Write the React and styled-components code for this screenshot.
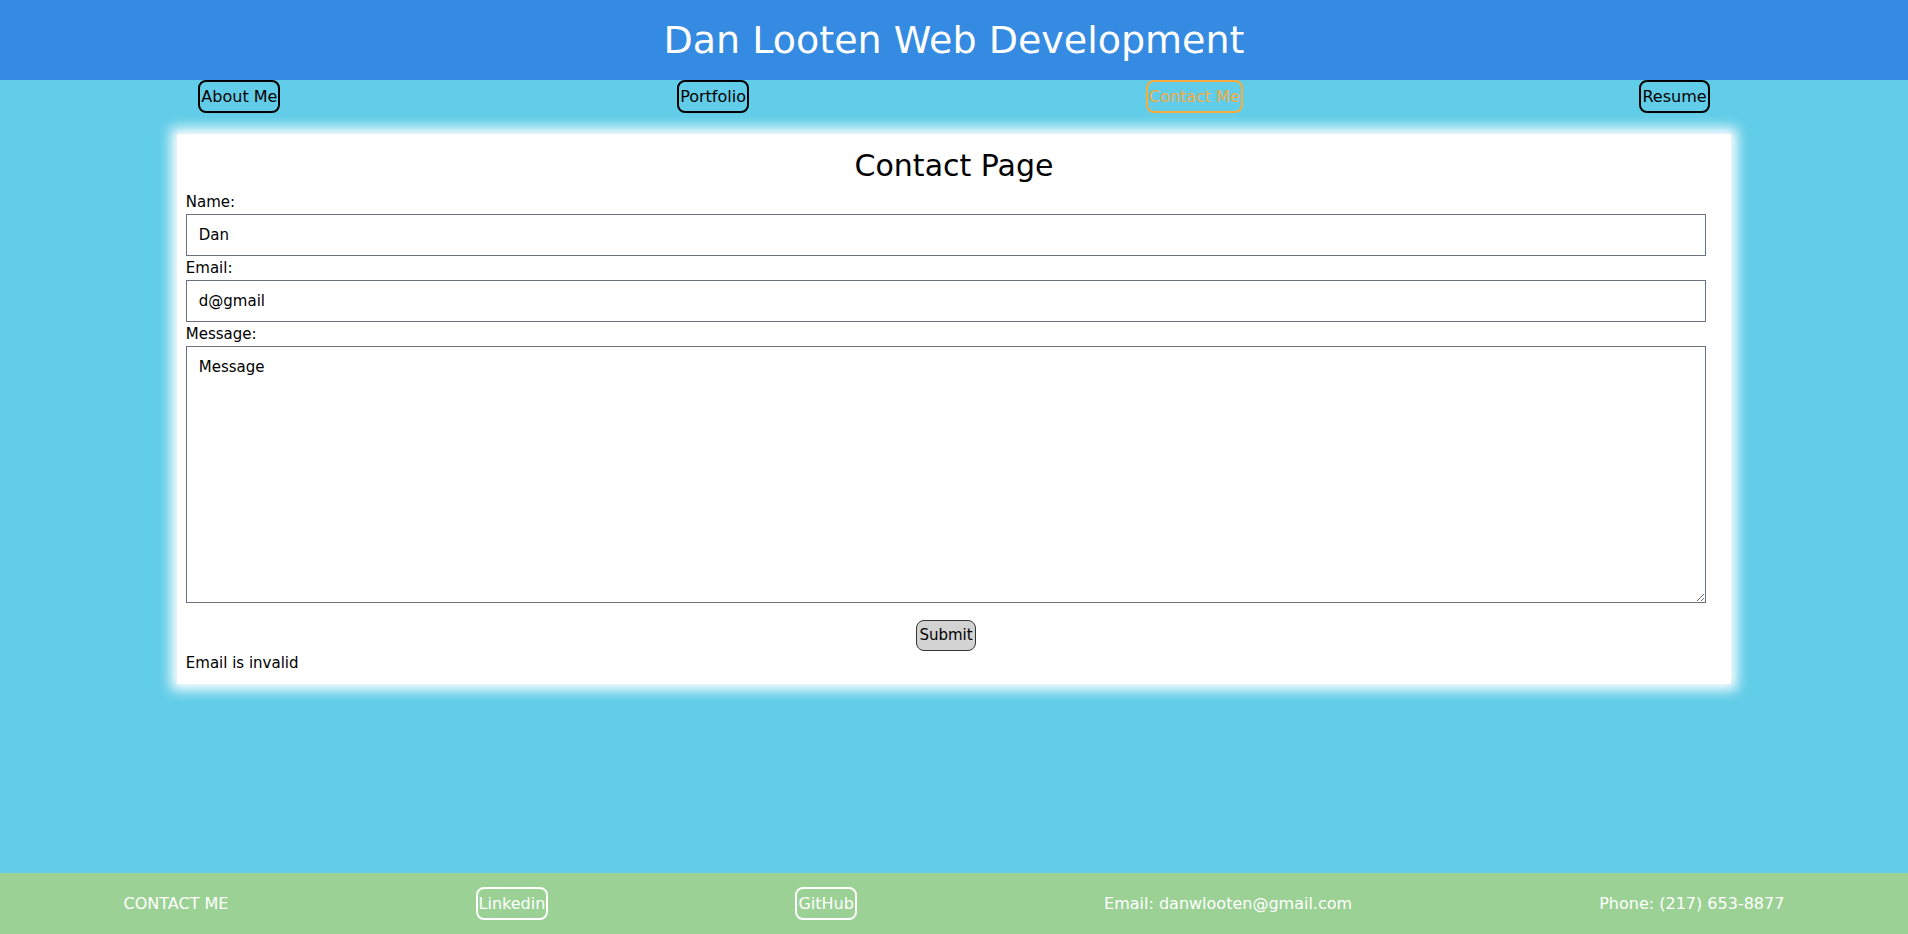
import styled, { createGlobalStyle } from "styled-components";

// 페이지 기본 스타일
const GlobalStyle = createGlobalStyle`
    html, body {
        margin: 0;
        padding: 0;
    }
    body {
        font-family: "DejaVu Sans", Verdana, sans-serif;
        background-color: #62cde8;
    }
`;

const Page = styled.div`
    min-height: 100vh;
    display: flex;
    flex-direction: column;
`;

const Header = styled.header`
    background-color: #348be1;
    height: 80px;
    display: flex;
    align-items: center;
    justify-content: center;
`;

const Title = styled.h1`
    margin: 0;
    color: white;
    font-size: 38px;
    font-weight: normal;
`;

const Nav = styled.nav`
    display: flex;
    justify-content: space-around;
`;

// 네비게이션 / 푸터 링크 버튼은 구조가 같으니 하나로 쓴다.
const LinkButton = styled.a`
    font-size: 16px;
    line-height: 19px;
    padding: 5px 1px;
    border: 2px solid ${(props) => props.$color};
    border-radius: 8px;
    color: ${(props) => props.$color};
    text-decoration: none;
    cursor: pointer;
`;

const Card = styled.main`
    width: calc(80% + 28px);
    box-sizing: border-box;
    margin: 21px auto 0;
    padding: 14px 9px 12px;
    background-color: white;
    box-shadow: 0 0 12px 6px white;
`;

const CardTitle = styled.h2`
    margin: 0 0 7px;
    font-size: 30px;
    font-weight: normal;
    text-align: center;
    line-height: 35px;
`;

// 입력칸은 카드 오른쪽에 여백을 더 둔다.
const Form = styled.form`
    display: flex;
    flex-direction: column;
    margin-right: 16px;
    font-size: 15px;
`;

const Label = styled.label`
    display: block;
    line-height: 24px;
`;

const Input = styled.input`
    box-sizing: border-box;
    width: 100%;
    height: 42px;
    padding: 0 12px;
    border: 1px solid #6b7280;
    font-family: inherit;
    font-size: 15px;
    color: black;
    outline: none;
`;

const TextArea = styled.textarea`
    box-sizing: border-box;
    width: 100%;
    height: 257px;
    padding: 11px 12px;
    border: 1px solid #6b7280;
    font-family: inherit;
    font-size: 15px;
    color: black;
    outline: none;
`;

const SubmitButton = styled.button`
    align-self: center;
    margin-top: 17px;
    padding: 5px 2px;
    background-color: #d3d3d3;
    border: 1px solid #333;
    border-radius: 8px;
    font-family: inherit;
    font-size: 15px;
    line-height: 19px;
    color: black;
`;

const ErrorText = styled.p`
    margin: 3px 0 0;
    font-size: 15px;
    line-height: 18px;
`;

const Footer = styled.footer`
    margin-top: auto;
    height: 61px;
    background-color: #9bd194;
    display: flex;
    justify-content: space-around;
    align-items: center;
    color: white;
    font-size: 16px;
`;

const FooterText = styled.span`
    line-height: 19px;
`;

const navItems = ["About Me", "Portfolio", "Contact Me", "Resume"];

export default function App() {
    return (
        <Page>
            <GlobalStyle />
            <Header>
                <Title>Dan Looten Web Development</Title>
            </Header>
            <Nav>
                {navItems.map((item) => (
                    <LinkButton
                        key={item}
                        $color={item === "Contact Me" ? "#f7ac3c" : "black"}
                    >
                        {item}
                    </LinkButton>
                ))}
            </Nav>
            <Card>
                <CardTitle>Contact Page</CardTitle>
                <Form onSubmit={(e) => e.preventDefault()}>
                    <Label htmlFor="name">Name:</Label>
                    <Input id="name" type="text" defaultValue="Dan" />
                    <Label htmlFor="email">Email:</Label>
                    <Input id="email" type="text" defaultValue="d@gmail" />
                    <Label htmlFor="message">Message:</Label>
                    <TextArea id="message" defaultValue="Message" />
                    <SubmitButton type="submit">Submit</SubmitButton>
                </Form>
                <ErrorText>Email is invalid</ErrorText>
            </Card>
            <Footer>
                <FooterText>CONTACT ME</FooterText>
                <LinkButton $color="white">Linkedin</LinkButton>
                <LinkButton $color="white">GitHub</LinkButton>
                <FooterText>Email: danwlooten@gmail.com</FooterText>
                <FooterText>Phone: (217) 653-8877</FooterText>
            </Footer>
        </Page>
    );
}
